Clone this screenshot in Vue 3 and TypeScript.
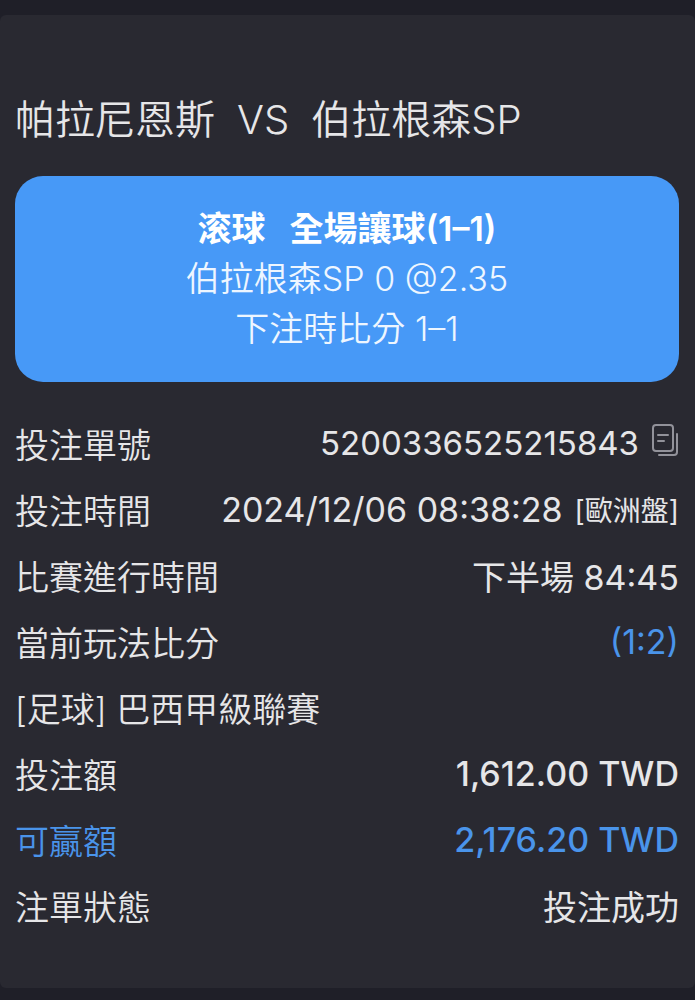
<script setup lang="ts">
interface Row {
  label: string
  value?: string
  note?: string
  copy?: boolean
  kind?: string
}

const rows: Row[] = [
  { label: '投注單號', value: '5200336525215843', copy: true, kind: 'serial' },
  { label: '投注時間', value: '2024/12/06 08:38:28', note: '[歐洲盤]' },
  { label: '比賽進行時間', value: '下半場 84:45' },
  { label: '當前玩法比分', value: '(1:2)', kind: 'score' },
  { label: '[足球] 巴西甲級聯賽' },
  { label: '投注額', value: '1,612.00 TWD', kind: 'amount' },
  { label: '可贏額', value: '2,176.20 TWD', kind: 'amount win' },
  { label: '注單狀態', value: '投注成功' },
]

function copyNumber(value?: string) {
  if (value) navigator.clipboard?.writeText(value)
}
</script>

<template>
  <main class="page">
    <article class="slip">
      <h1 class="match"><span>帕拉尼恩斯</span><span>VS</span><span>伯拉根森SP</span></h1>
      <section class="pick">
        <p class="market"><span>滚球</span><span>全場讓球(1–1)</span></p>
        <p>伯拉根森SP 0 @2.35</p>
        <p>下注時比分 1–1</p>
      </section>
      <dl class="rows">
        <div v-for="row in rows" :key="row.label" class="row" :class="row.kind">
          <dt>{{ row.label }}</dt>
          <dd v-if="row.value">
            <span>{{ row.value }}</span>
            <small v-if="row.note">{{ row.note }}</small>
            <button v-if="row.copy" type="button" class="copy" aria-label="複製" @click="copyNumber(row.value)">
              <svg viewBox="0 0 28 38" width="28" height="38" fill="none" stroke="currentColor" stroke-width="2" stroke-linecap="round" stroke-linejoin="round">
                <rect x="2" y="1" width="20" height="26" rx="3" />
                <path d="M7 11H17M7 17H13" />
                <path d="M26 10V28Q26 31 23 31H8" />
              </svg>
            </button>
          </dd>
        </div>
      </dl>
    </article>
  </main>
</template>

<style>
body {
  margin: 0;
  background: #1f1f28;
}
</style>

<style scoped>
.page {
  min-height: 100vh;
  box-sizing: border-box;
  padding: 15px 0 12px;
  background: #1f1f28;
  color: #e6e6e8;
  font-family: Inter, "Noto Sans CJK TC", sans-serif;
  font-size: 34px;
}
.slip {
  box-sizing: border-box;
  padding: 77px 16px 50px 15px;
  border-radius: 6px;
  background: #292931;
}
.match {
  display: flex;
  gap: 22px;
  margin: 0 0 28px;
  font-size: 40px;
  font-weight: 350;
  line-height: 56px;
  white-space: nowrap;
}
.pick {
  padding: 28px 16px;
  border-radius: 28px;
  background: #4799f7;
  color: #eef6ff;
  text-align: center;
}
.pick p {
  margin: 0;
  font-weight: 350;
  line-height: 50px;
}
.pick .market {
  display: flex;
  justify-content: center;
  gap: 24px;
  color: #fff;
  font-weight: 600;
}
.rows {
  margin: 28px 0 0;
}
.row {
  display: flex;
  justify-content: space-between;
  align-items: center;
  height: 66px;
  font-weight: 400;
  white-space: nowrap;
}
dt {
  font-weight: 350;
}
dd {
  display: flex;
  align-items: center;
  gap: 12px;
  margin: 0;
}
small {
  font-size: 28px;
}
.serial dd {
  font-size: 33px;
}
.score dd,
.win {
  color: #4a94ea;
}
.amount dd {
  font-weight: 500;
}
.copy {
  display: flex;
  padding: 0;
  border: 0;
  background: none;
  color: #92929a;
  cursor: pointer;
}
</style>
